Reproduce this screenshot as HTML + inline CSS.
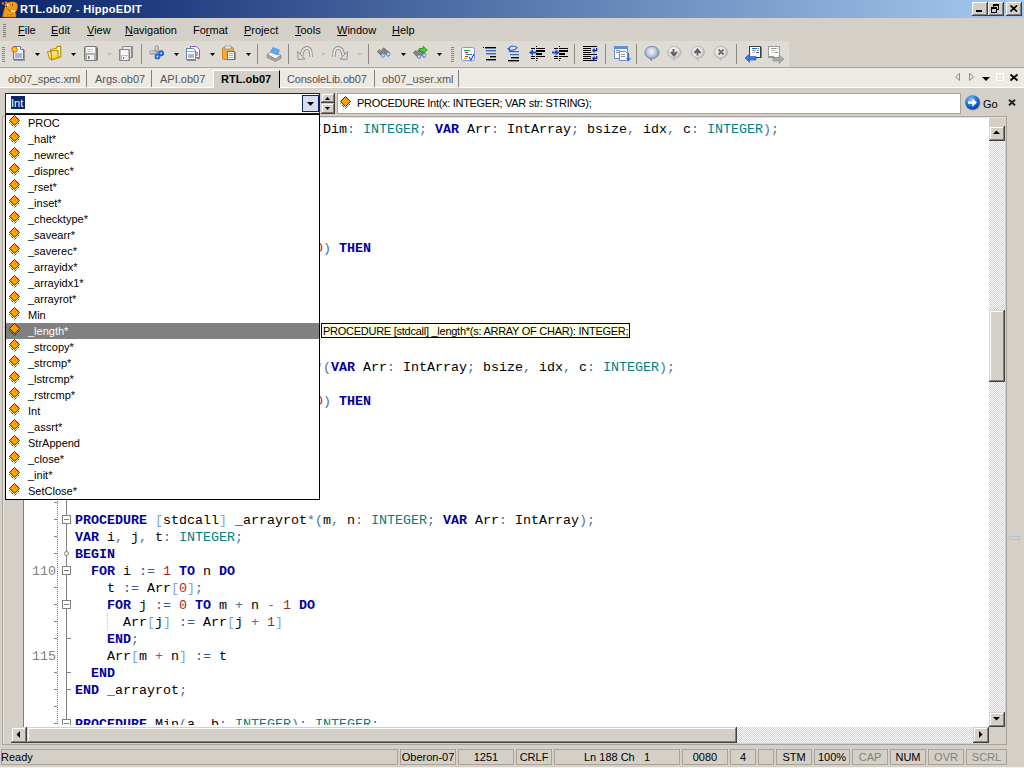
<!DOCTYPE html>
<html><head><meta charset="utf-8">
<style>
*{box-sizing:border-box}
body{margin:0;width:1024px;height:768px;position:relative;overflow:hidden;background:#D4D0C8;font-family:"Liberation Sans",sans-serif;font-size:11px;color:#000}
.a{position:absolute}
#title{left:0;top:0;width:1024px;height:18px;background:linear-gradient(to right,#0A246A,#A6CAF0)}
#title .t{left:20px;top:2px;color:#fff;font-weight:bold;font-size:11px;line-height:14px;white-space:nowrap;letter-spacing:0.3px}
.cb{width:16px;height:14px;top:2px;background:#D4D0C8;box-shadow:inset -1px -1px #404040,inset 1px 1px #fff,inset -2px -2px #808080,inset 2px 2px #D4D0C8}
.menu{top:23px;line-height:14px;white-space:nowrap}
.menu u{text-decoration:none;background:linear-gradient(#000,#000) no-repeat 0 100%/100% 1px}
.tab{top:72px;line-height:14px;white-space:nowrap;color:#555}
.sep{width:1px;background:#808080}
.btn3d{background:#D4D0C8;box-shadow:inset -1px -1px #404040,inset 1px 1px #D4D0C8,inset -2px -2px #808080,inset 2px 2px #fff}
.chk{background-color:#fff;background-image:linear-gradient(45deg,#D4D0C8 25%,transparent 25%,transparent 75%,#D4D0C8 75%),linear-gradient(45deg,#D4D0C8 25%,transparent 25%,transparent 75%,#D4D0C8 75%);background-size:2px 2px;background-position:0 0,1px 1px}
.sp{top:749px;height:16px;border:1px solid #A8A49C;line-height:14px;text-align:center;white-space:nowrap}
#code{left:75px;top:0;font-family:"Liberation Mono",monospace;font-size:13.333px;line-height:17px;white-space:pre;color:#000}
.k{color:#0000A0;font-weight:bold}
.ty{color:#008080}
.p{color:#4F6FA0}
.n{color:#A02828}
.lnum{font-family:"Liberation Mono",monospace;font-size:13.333px;line-height:17px;color:#808080;white-space:pre}
.li{height:16px;left:0;width:313px;line-height:16px;white-space:nowrap}
.li span{position:absolute;left:22px;top:0}
.li .dm{left:3px;top:0}
.sel{background:#808080;color:#fff}
.o{color:#3D5C8C}
.br{color:#7BA7D7}
i{font-style:normal}
</style></head><body>

<!-- title bar -->
<div id="title" class="a">
  <svg class="a" style="left:0px;top:0px" width="19" height="18" viewBox="0 0 19 18">
    <circle cx="2.9" cy="3.4" r="1.3" fill="#C8741A"/><circle cx="6" cy="2.6" r="1.3" fill="#C8741A"/>
    <path d="M2.5 17 Q3.5 10.5 5.2 6.5 L4.8 4.8 Q5.5 2.6 8.5 2.3 Q12.5 1.2 16.2 2.6 Q18.2 4.5 17.4 8.5 Q16.8 11 15.2 12 Q16.2 14 16 17 Z" fill="#F39A12" stroke="#B86400" stroke-width="0.5"/>
    <ellipse cx="7.1" cy="5.6" rx="1.7" ry="1.1" transform="rotate(-35 7.1 5.6)" fill="#fff"/>
    <circle cx="6.5" cy="6.2" r="0.75" fill="#000"/>
    <ellipse cx="12.5" cy="5" rx="0.55" ry="0.9" fill="#6A3000"/>
    <path d="M7.6 8.6 Q9 11.2 11.2 11.6 L15.6 11.4" fill="none" stroke="#8A4A10" stroke-width="0.8"/>
    <path d="M11 10.6 H15.3 L15 12 H11.3Z" fill="#fff"/>
    <path d="M7 14.3 Q10 15.6 13.2 14.2" fill="none" stroke="#C06A00" stroke-width="0.7"/>
  </svg>
  <div class="a t">RTL.ob07 - HippoEDIT</div>
  <div class="a cb" style="left:972px"><div class="a" style="left:4px;top:8px;width:6px;height:2px;background:#000"></div></div>
  <div class="a cb" style="left:988px">
    <div class="a" style="left:5px;top:2px;width:6px;height:6px;border:1px solid #000;border-top-width:2px"></div>
    <div class="a" style="left:3px;top:5px;width:6px;height:6px;border:1px solid #000;border-top-width:2px;background:#D4D0C8"></div>
  </div>
  <div class="a cb" style="left:1006px">
    <svg class="a" style="left:4px;top:3px" width="8" height="7"><path d="M0.5 0.5 L7 6.5 M7 0.5 L0.5 6.5" stroke="#000" stroke-width="1.7"/></svg>
  </div>
</div>

<!-- menu bar -->
<div class="a" style="left:3px;top:24px;width:3px;height:13px;background:repeating-linear-gradient(#808080 0 1px,transparent 1px 2px)"></div>
<div class="a menu" style="left:18px"><u>F</u>ile</div>
<div class="a menu" style="left:51px"><u>E</u>dit</div>
<div class="a menu" style="left:87px"><u>V</u>iew</div>
<div class="a menu" style="left:125px"><u>N</u>avigation</div>
<div class="a menu" style="left:193px">Fo<u>r</u>mat</div>
<div class="a menu" style="left:244px"><u>P</u>roject</div>
<div class="a menu" style="left:295px"><u>T</u>ools</div>
<div class="a menu" style="left:337px"><u>W</u>indow</div>
<div class="a menu" style="left:392px"><u>H</u>elp</div>

<!-- toolbar -->
<svg class="a" style="left:0;top:0" width="800" height="68" viewBox="0 0 800 68">
<defs>
<linearGradient id="gpage" x1="0" y1="0" x2="0" y2="1"><stop offset="0" stop-color="#fff"/><stop offset="1" stop-color="#DDE4F2"/></linearGradient>
<linearGradient id="gfold" x1="0" y1="0" x2="1" y2="1"><stop offset="0" stop-color="#FFF6B0"/><stop offset="1" stop-color="#F2C200"/></linearGradient>
<linearGradient id="gdisk" x1="0" y1="0" x2="1" y2="1"><stop offset="0" stop-color="#C8C8C8"/><stop offset="1" stop-color="#808080"/></linearGradient>
<radialGradient id="gsun"><stop offset="0" stop-color="#FFF200"/><stop offset="0.5" stop-color="#FFB000"/><stop offset="1" stop-color="#F05020" stop-opacity="0.8"/></radialGradient>
<radialGradient id="glens" cx="0.4" cy="0.4"><stop offset="0" stop-color="#E8F4FF"/><stop offset="1" stop-color="#5AA0E8"/></radialGradient>
<radialGradient id="gball" cx="0.45" cy="0.35"><stop offset="0" stop-color="#F4F6FA"/><stop offset="0.6" stop-color="#C0CCDC"/><stop offset="1" stop-color="#8CA0BC"/></radialGradient>
<radialGradient id="gball2" cx="0.45" cy="0.35"><stop offset="0" stop-color="#FFFFFF"/><stop offset="0.7" stop-color="#E4E4E4"/><stop offset="1" stop-color="#B8B8B8"/></radialGradient>
<path id="dd" d="M0 0H5L2.5 3Z"/>
</defs>
<!-- toolbar band -->
<rect x="0" y="41" width="789" height="26" fill="#DEDBD5"/>
<rect x="0" y="67" width="1024" height="1" fill="#A8A49C"/>
<!-- grippers -->
<g fill="#8A8A8A">
<rect x="2" y="47" width="3" height="1"/><rect x="2" y="49" width="3" height="1"/><rect x="2" y="51" width="3" height="1"/><rect x="2" y="53" width="3" height="1"/><rect x="2" y="55" width="3" height="1"/><rect x="2" y="57" width="3" height="1"/><rect x="2" y="59" width="3" height="1"/><rect x="2" y="61" width="3" height="1"/>
<rect x="451" y="47" width="3" height="1"/><rect x="451" y="49" width="3" height="1"/><rect x="451" y="51" width="3" height="1"/><rect x="451" y="53" width="3" height="1"/><rect x="451" y="55" width="3" height="1"/><rect x="451" y="57" width="3" height="1"/><rect x="451" y="59" width="3" height="1"/><rect x="451" y="61" width="3" height="1"/>
</g>
<!-- separators -->
<g fill="#8C8984">
<rect x="141" y="44" width="1" height="20"/><rect x="257" y="44" width="1" height="20"/><rect x="288" y="44" width="1" height="20"/><rect x="368" y="44" width="1" height="20"/>
<rect x="574" y="44" width="1" height="20"/><rect x="605" y="44" width="1" height="20"/><rect x="636" y="44" width="1" height="20"/><rect x="736" y="44" width="1" height="20"/>
</g>
<!-- dropdown arrows -->
<g fill="#000">
<use href="#dd" x="35" y="53"/><use href="#dd" x="71" y="53"/><use href="#dd" x="174" y="53"/><use href="#dd" x="210" y="53"/><use href="#dd" x="246" y="53"/><use href="#dd" x="401" y="53"/><use href="#dd" x="437" y="53"/>
</g>
<g fill="#C4C0B8"><use href="#dd" x="107" y="53"/><use href="#dd" x="321" y="53"/><use href="#dd" x="357" y="53"/></g>

<!-- New -->
<path d="M13.5 46.5H20.5L23.5 49.5V59.5H13.5Z" fill="url(#gpage)" stroke="#6478A8"/>
<path d="M20.5 46.5V49.5H23.5" fill="#fff" stroke="#6478A8"/>
<rect x="24" y="50" width="1" height="11" fill="#9A9A9A"/><rect x="14" y="60" width="11" height="1" fill="#9A9A9A"/>
<rect x="15" y="53" width="7" height="5" fill="#A8B8DC"/>
<circle cx="14.5" cy="49.5" r="3.2" fill="url(#gsun)"/>
<!-- Folder -->
<defs><linearGradient id="gfold2" x1="0" y1="0" x2="0" y2="1"><stop offset="0" stop-color="#FFF6B8"/><stop offset="1" stop-color="#F4CC10"/></linearGradient></defs>
<path d="M50.5 49.5L56.5 48.3L57.3 46.3L60.7 46.2V56.8L51.5 59.6Z" fill="#FFF6C8" stroke="#C48E00" stroke-width="1.2"/>
<path d="M51 50.8L57.8 50.3L58.3 57.6L51.6 59.8Z" fill="url(#gfold2)" stroke="#C48E00" stroke-width="1.2"/>
<path d="M47.6 51.8L50.8 51.2L51.6 59.6L49.4 58.4Z" fill="#FFF2A8" stroke="#C48E00" stroke-width="1.1"/>
<!-- Save -->
<path d="M84.5 47.5Q84.5 46.5 85.5 46.5H96.5L97.5 47.5V59.5Q97.5 60.5 96.5 60.5H85.5Q84.5 60.5 84.5 59.5Z" fill="#B0B0B0" stroke="#787878"/>
<rect x="96" y="48" width="1" height="12" fill="#7A7A7A"/>
<rect x="86" y="47" width="9" height="6" fill="#FAFAFA"/>
<rect x="87" y="49" width="6" height="1" fill="#C8C8C8"/><rect x="87" y="51" width="6" height="1" fill="#C8C8C8"/>
<rect x="87" y="55" width="7" height="5" fill="#F0F0F0"/><rect x="88" y="56" width="1.5" height="3" fill="#707070"/>
<!-- Save all -->
<path d="M122.5 46.5H132.5V57.5H122.5Z" fill="#E8E8E8" stroke="#8E8E8E"/>
<rect x="131" y="47" width="1.2" height="10" fill="#8A8A8A"/>
<path d="M119.5 49.5H129.5V60.5H119.5Z" fill="#BEBEBE" stroke="#858585"/>
<rect x="121" y="50" width="7" height="5" fill="#F6F6F6"/>
<rect x="122" y="56" width="6" height="4" fill="#EEEEEE"/><rect x="123" y="57" width="1" height="2" fill="#777"/>
<!-- Cut -->
<defs><linearGradient id="gblade" x1="0" y1="0" x2="1" y2="1"><stop offset="0" stop-color="#FFFFFF"/><stop offset="1" stop-color="#A0A0A0"/></linearGradient></defs>
<rect x="155.2" y="45.8" width="3" height="7.5" rx="1.3" fill="url(#gblade)" stroke="#6E6E6E" stroke-width="0.7"/>
<rect x="149.8" y="51" width="7.5" height="3" rx="1.3" fill="url(#gblade)" stroke="#6E6E6E" stroke-width="0.7"/>
<circle cx="161.2" cy="53.2" r="2" fill="none" stroke="#2166D8" stroke-width="1.9"/>
<circle cx="157.5" cy="56.6" r="2" fill="none" stroke="#2166D8" stroke-width="1.9"/>
<!-- Copy -->
<path d="M190.5 46.5H196.5L199.5 49.5V57.5H190.5Z" fill="#F8F6FC" stroke="#8A5CC0"/>
<rect x="196" y="52" width="2" height="4" fill="#B8A0DC"/>
<path d="M186.5 48.5H193.5L195.5 50.5V59.5H186.5Z" fill="#fff" stroke="#6A7EB0"/>
<rect x="187" y="51" width="8" height="1" fill="#9AAAD0"/>
<rect x="188" y="54" width="6" height="4" fill="#A8B8DC"/>
<rect x="197" y="58" width="3" height="1" fill="#8A8A8A"/><rect x="187" y="60" width="9" height="1" fill="#8A8A8A"/>
<!-- Paste -->
<rect x="222.5" y="47.5" width="11" height="12" rx="1.5" fill="#F6A83A" stroke="#D88418"/>
<rect x="225" y="46" width="6" height="3" fill="#E8E8E8" stroke="#909090" stroke-width="0.7"/>
<rect x="227.5" y="51.5" width="7" height="8" fill="#FAFAFF" stroke="#6E6E6E"/>
<g fill="#A0A8D8"><rect x="229" y="53" width="4" height="1"/><rect x="229" y="55" width="4" height="1"/><rect x="229" y="57" width="4" height="1"/></g>
<rect x="235" y="52" width="1" height="8" fill="#9A9A9A"/>
<!-- Print -->
<path d="M267 54.5L272.5 51L281 55.5L275.5 59Z" fill="#F0F0F0" stroke="#8A8A8A" stroke-width="0.8"/>
<path d="M270.5 52L273 47.5L279.5 50L277.5 55Z" fill="#5AAAF2" stroke="#3A88D8" stroke-width="0.6"/>
<path d="M267 54.5V57.5L275.5 61.5L281 58.5V55.5L275.5 59Z" fill="#A8A8A8" stroke="#7A7A7A" stroke-width="0.6"/>
<rect x="279" y="54" width="1.2" height="1.2" fill="#F09030"/>
<!-- Undo (disabled) -->
<path d="M301.5 56 Q302.5 48 307 47.8 Q311.5 48.3 311 57" fill="none" stroke="#8E8E8E" stroke-width="3.6"/>
<path d="M301.5 56 Q302.5 48 307 47.8 Q311.5 48.3 311 57" fill="none" stroke="#E6E6E6" stroke-width="1.8"/>
<path d="M297.5 51.5L298 59.5L305 59Z" fill="#DADADA" stroke="#8A8A8A" stroke-width="0.9"/>
<!-- Redo -->
<path d="M343.5 56 Q342.5 48 338 47.8 Q333.5 48.3 334 57" fill="none" stroke="#8E8E8E" stroke-width="3.6"/>
<path d="M343.5 56 Q342.5 48 338 47.8 Q333.5 48.3 334 57" fill="none" stroke="#E6E6E6" stroke-width="1.8"/>
<path d="M347.5 51.5L347 59.5L340 59Z" fill="#DADADA" stroke="#8A8A8A" stroke-width="0.9"/>
<!-- Binoculars -->
<g transform="translate(0 0)">
<path d="M377.5 51.5L379.5 49.5L385 54.5L383 57.5Z" fill="#858585" stroke="#4E4E4E" stroke-width="0.7"/>
<path d="M381.5 49.5L383.5 48L390 53L388 56.5Z" fill="#858585" stroke="#4E4E4E" stroke-width="0.7"/>
<path d="M379 50.5L383 48.7" stroke="#C8C8C8" stroke-width="0.8"/>
<circle cx="383.3" cy="55.6" r="1.9" fill="url(#glens)"/>
<circle cx="388.6" cy="54.3" r="1.9" fill="url(#glens)"/>
</g>
<!-- Find next -->
<g transform="translate(36 1.2)">
<path d="M377.5 51.5L379.5 49.5L385 54.5L383 57.5Z" fill="#858585" stroke="#4E4E4E" stroke-width="0.7"/>
<path d="M381.5 49.5L383.5 48L390 53L388 56.5Z" fill="#858585" stroke="#4E4E4E" stroke-width="0.7"/>
<circle cx="383.3" cy="55.6" r="1.9" fill="url(#glens)"/>
<circle cx="388.6" cy="54.3" r="1.9" fill="url(#glens)"/>
</g>
<path d="M419.5 48.5H423V46.3L427.3 50L423 53.7V51.5H419.5Z" fill="#46D23C" stroke="#1E9A22" stroke-width="0.9"/>
<!-- syntax -->
<rect x="461.5" y="47.5" width="13" height="13" rx="2" fill="#F8FAFF" stroke="#7A9AE0"/>
<rect x="464" y="50" width="6" height="1" fill="#22A030"/><rect x="465" y="52" width="3" height="1" fill="#E02020"/>
<rect x="466" y="54" width="6" height="1" fill="#3070D0"/><rect x="465" y="56" width="3" height="1" fill="#E02020"/><rect x="464" y="58" width="3" height="1" fill="#E0A000"/>
<path d="M469 57L471 60L474 54" fill="none" stroke="#2060C0" stroke-width="1.2"/>
<!-- align right -->
<g fill="#000"><rect x="485" y="47" width="11" height="1.4"/><rect x="490" y="56" width="6" height="1.4"/><rect x="486" y="59" width="10" height="1.4"/><rect x="483" y="47" width="1" height="1"/></g>
<g fill="#2D6CD0"><rect x="486" y="50" width="10" height="1.4"/><rect x="486" y="53" width="10" height="1.4"/></g>
<!-- wrap -->
<path d="M509 50.5H512 Q517 49 517 47.5 Q516 46 512 46 Q508 47 510 50" fill="none" stroke="#2D6CD0" stroke-width="1.2"/>
<path d="M507 48L509 51L510 48Z" fill="#2D6CD0"/>
<rect x="509" y="51" width="10" height="1.2" fill="#2D6CD0"/><rect x="510" y="54" width="9" height="1.2" fill="#2D6CD0"/>
<rect x="511" y="57" width="8" height="1.4" fill="#000"/><rect x="508" y="60" width="11" height="1.4" fill="#000"/>
<!-- outdent -->
<g fill="#000" transform="translate(0 0)"><rect x="536" y="46" width="1" height="1"/><rect x="536" y="60" width="1" height="1"/><rect x="531" y="48" width="4" height="1"/><rect x="536" y="48" width="9" height="1"/><rect x="536" y="50" width="9" height="2"/><rect x="536" y="53" width="6" height="2"/><rect x="531" y="56" width="4" height="1"/><rect x="536" y="56" width="9" height="1"/><rect x="531" y="58" width="4" height="1"/><rect x="536" y="58" width="2" height="1"/></g><path d="M529 52.5L533 49.3V51.6H536.5V53.4H533V55.7Z" fill="#1E48D0"/>
<!-- indent -->
<g fill="#000" transform="translate(23 0)"><rect x="536" y="46" width="1" height="1"/><rect x="536" y="60" width="1" height="1"/><rect x="531" y="48" width="4" height="1"/><rect x="536" y="48" width="9" height="1"/><rect x="536" y="50" width="9" height="2"/><rect x="536" y="53" width="6" height="2"/><rect x="531" y="56" width="4" height="1"/><rect x="536" y="56" width="9" height="1"/><rect x="531" y="58" width="4" height="1"/><rect x="536" y="58" width="2" height="1"/></g><path d="M559.5 52.5L555.5 49.3V51.6H552V53.4H555.5V55.7Z" fill="#1E48D0"/>
<!-- paragraph -->
<g fill="#000"><rect x="583" y="46" width="14" height="1"/><rect x="583" y="48" width="8" height="1"/><rect x="583" y="50" width="8" height="1"/><rect x="583" y="52" width="8" height="1"/><rect x="583" y="54" width="14" height="1"/><rect x="583" y="56" width="8" height="1"/><rect x="583" y="58" width="8" height="1"/><rect x="583" y="60" width="14" height="1"/></g>
<g fill="#0A2AA8"><path d="M596 48H597.3V51.3H594.5V53.2L592 50.5L594.5 47.8V49.7H596Z"/><path d="M596 56H597.3V59.3H594.5V61.2L592 58.5L594.5 55.8V57.7H596Z"/></g>
<!-- window -->
<rect x="614.5" y="46.5" width="13" height="12" fill="#F4F7FC" stroke="#6A8ED0"/>
<rect x="615" y="47" width="12" height="2" fill="#5A90E0"/>
<rect x="616" y="50" width="4" height="1" fill="#8090B0"/><rect x="616" y="52" width="4" height="1" fill="#8090B0"/>
<path d="M619.5 51.5H625.5L627.5 53.5V60.5H619.5Z" fill="#fff" stroke="#6A8ED0"/>
<rect x="621" y="54" width="4" height="1" fill="#8090B0"/><rect x="621" y="56" width="4" height="1" fill="#8090B0"/>
<path d="M628.5 53V60M626.5 58L628.5 60.5L630.5 58" fill="none" stroke="#2D6CD0" stroke-width="1.2"/>
<!-- balloons -->
<path d="M652 46.5 A6.5 6 0 1 1 651 58.3 L652 61 L649 58 A6.5 6 0 0 1 652 46.5Z" fill="url(#gball)" stroke="#6E8AAE" stroke-width="0.9"/>
<path d="M674.5 46.5 A6 5.8 0 1 1 674 58 L674.5 60.5 L672 57.8 A6 5.8 0 0 1 674.5 46.5Z" fill="url(#gball2)" stroke="#B4B4B4" stroke-width="0.9"/>
<path d="M673.5 49V54M671 52L674 55.5L677 52" fill="none" stroke="#606060" stroke-width="2"/>
<path d="M698 46.5 A6 5.8 0 1 1 697.5 58 L698 60.5 L695.5 57.8 A6 5.8 0 0 1 698 46.5Z" fill="url(#gball2)" stroke="#B4B4B4" stroke-width="0.9"/>
<path d="M697.5 55.5V50.5M694.5 53L697.5 49.5L700.5 53" fill="none" stroke="#606060" stroke-width="2"/>
<path d="M721 46.5 A6 5.8 0 1 1 720.5 58 L721 60.5 L718.5 57.8 A6 5.8 0 0 1 721 46.5Z" fill="url(#gball2)" stroke="#B4B4B4" stroke-width="0.9"/>
<path d="M718.5 49.5L723.5 54.5M723.5 49.5L718.5 54.5" fill="none" stroke="#707070" stroke-width="2"/>
<!-- back -->
<rect x="749.5" y="46.5" width="11" height="11" fill="#fff" stroke="#404040"/>
<rect x="761" y="47" width="1" height="11" fill="#808080"/>
<rect x="752" y="48" width="5" height="1" fill="#2A62C8"/><rect x="758" y="48" width="1" height="1" fill="#2A62C8"/>
<rect x="752" y="50" width="4" height="1" fill="#999"/><rect x="757" y="50" width="2" height="1" fill="#999"/>
<rect x="752" y="52" width="3" height="1" fill="#BBB"/><rect x="756" y="52" width="3" height="1" fill="#2A62C8"/>
<path d="M745 58L749.5 54V56.5H756V60H749.5V62.5Z" fill="#3A7AE0" stroke="#2050B0" stroke-width="0.6"/>
<!-- forward -->
<rect x="768.5" y="46.5" width="11" height="11" fill="#fff" stroke="#9A9A9A"/>
<rect x="768" y="56" width="6" height="2" fill="#9A9A9A"/>
<rect x="771" y="48" width="5" height="1" fill="#999"/><rect x="777" y="48" width="1" height="1" fill="#999"/>
<rect x="771" y="50" width="4" height="1" fill="#BBB"/><rect x="771" y="52" width="3" height="1" fill="#CCC"/><rect x="775" y="52" width="3" height="1" fill="#888"/>
<path d="M784 59L779 55V57.5H773V61H779V63.5Z" fill="#A8A8A8" stroke="#8A8A8A" stroke-width="0.6"/>
</svg>


<!-- tab bar -->
<div class="a" style="left:0;top:67px;width:1024px;height:1px;background:#A9A59D"></div>
<div class="a" style="left:0;top:68px;width:1024px;height:19px;background:#EDEAE4"></div>
<div class="a" style="left:0;top:87px;width:1024px;height:1px;background:#fff"></div>
<div class="a tab" style="left:8px;letter-spacing:-0.15px">ob07_spec.xml</div>
<div class="a sep" style="left:86px;top:70px;height:17px"></div>
<div class="a tab" style="left:95px">Args.ob07</div>
<div class="a sep" style="left:151px;top:70px;height:17px"></div>
<div class="a tab" style="left:160px">API.ob07</div>
<div class="a" style="left:213px;top:70px;width:67px;height:18px;background:#D4D0C8;border-left:1px solid #fff;border-top:1px solid #fff;border-right:1px solid #000"></div>
<div class="a tab" style="left:221px;color:#000;font-weight:bold">RTL.ob07</div>
<div class="a tab" style="left:287px;letter-spacing:-0.2px">ConsoleLib.ob07</div>
<div class="a sep" style="left:374px;top:70px;height:17px"></div>
<div class="a tab" style="left:382px">ob07_user.xml</div>
<div class="a sep" style="left:458px;top:70px;height:17px"></div>

<svg class="a" style="left:950px;top:70px" width="74" height="16" viewBox="950 70 74 16">
<path d="M959.5 73.5V80.5L955.5 77Z" fill="none" stroke="#8A8A8A"/>
<path d="M969.5 73.5V80.5L973.5 77Z" fill="none" stroke="#8A8A8A"/>
<path d="M982 77H990L986 81Z" fill="#000"/>
<rect x="996.5" y="73.5" width="7" height="7" fill="none" stroke="#fff"/>
<path d="M1010.5 74.5L1017.5 80.5M1017.5 74.5L1010.5 80.5" stroke="#000" stroke-width="1.8"/>
</svg>
<!-- nav bar -->
<div class="a" style="left:5px;top:93px;width:315px;height:21px;border:1px solid #0A246A;background:#fff"></div>
<div class="a" style="left:11px;top:96px;width:14px;height:13px;background:#0A246A"></div>
<div class="a" style="left:11px;top:96px;color:#fff;line-height:14px">Int</div>
<div class="a" style="left:302px;top:95px;width:17px;height:17px;border:1px solid #0A246A;background:#D8DDEF"></div>
<svg class="a" style="left:307px;top:102px" width="7" height="4"><path d="M0 0H7L3.5 4Z" fill="#000"/></svg>
<div class="a btn3d" style="left:321px;top:93px;width:14px;height:10px"></div>
<div class="a btn3d" style="left:321px;top:103px;width:14px;height:11px"></div>
<svg class="a" style="left:325px;top:97px" width="5" height="3"><path d="M0 3H5L2.5 0Z" fill="#000"/></svg>
<svg class="a" style="left:325px;top:107px" width="5" height="3"><path d="M0 0H5L2.5 3Z" fill="#000"/></svg>
<div class="a" style="left:337px;top:93px;width:624px;height:21px;background:#fff;border:1px solid #A8A49C"></div>
<div class="a" style="left:357px;top:96px;line-height:14px;white-space:nowrap;letter-spacing:-0.3px">PROCEDURE Int(x: INTEGER; VAR str: STRING);</div>
<svg class="a" style="left:340px;top:96px" width="11" height="13"><use href="#dia"/></svg>
<svg class="a" style="left:964px;top:94px" width="18" height="18" viewBox="0 0 18 18">
<defs><radialGradient id="ggo" cx="0.4" cy="0.3" r="0.7"><stop offset="0" stop-color="#7CC4FF"/><stop offset="0.6" stop-color="#1F6FD8"/><stop offset="1" stop-color="#0A3E9E"/></radialGradient></defs>
<circle cx="8.5" cy="8.5" r="7.5" fill="#7A7A7A" opacity="0.35" transform="translate(0.8 0.8)"/>
<circle cx="8.5" cy="8.5" r="7.3" fill="url(#ggo)"/>
<path d="M4 7.3H8.3V4.3L12.8 8.5L8.3 12.7V9.7H4Z" fill="#fff"/>
</svg>
<div class="a" style="left:983px;top:97px;line-height:14px">Go</div>
<svg class="a" style="left:1008px;top:99px" width="8" height="7"><path d="M1 0.8L7 6.2M7 0.8L1 6.2" stroke="#222" stroke-width="2"/></svg>

<!-- editor frame -->
<div class="a" style="left:2px;top:116px;width:1005px;height:629px;border:1px solid #A8A49C"></div>
<div class="a" style="left:3px;top:117px;width:1003px;height:1px;background:#E6E3DD"></div>
<div class="a" style="left:3px;top:117px;width:1px;height:627px;background:#E6E3DD"></div>
<div class="a" style="left:23px;top:118px;width:1px;height:609px;background:#808080"></div>
<div class="a" style="left:24px;top:725px;width:965px;height:2px;background:#fff"></div>
<div class="a" style="left:24px;top:118px;width:965px;height:607px;background:#fff;overflow:hidden">
  <div class="a" id="code" style="left:51px;top:3px"><b class="k">PROCEDURE</b> <i class="br">[</i>stdcall<i class="br">]</i> _arrayidx<i class="p">*</i><i class="p">(</i>Dim<i class="p">:</i> <i class="ty">INTEGER</i><i class="p">;</i> <b class="k">VAR</b> Arr<i class="p">:</i> IntArray<i class="p">;</i> bsize<i class="p">,</i> idx<i class="p">,</i> c<i class="p">:</i> <i class="ty">INTEGER</i><i class="p">)</i><i class="p">;</i>






                        idx <i class="p">&lt;</i> <i class="n">0</i><i class="p">)</i> <b class="k">THEN</b>






<b class="k">PROCEDURE</b> <i class="br">[</i>stdcall<i class="br">]</i> _arrayidx1<i class="p">*</i><i class="p">(</i><b class="k">VAR</b> Arr<i class="p">:</i> IntArray<i class="p">;</i> bsize<i class="p">,</i> idx<i class="p">,</i> c<i class="p">:</i> <i class="ty">INTEGER</i><i class="p">)</i><i class="p">;</i>

                        idx <i class="p">&lt;</i> <i class="n">0</i><i class="p">)</i> <b class="k">THEN</b>






<b class="k">PROCEDURE</b> <i class="br">[</i>stdcall<i class="br">]</i> _arrayrot<i class="p">*</i><i class="p">(</i>m<i class="p">,</i> n<i class="p">:</i> <i class="ty">INTEGER</i><i class="p">;</i> <b class="k">VAR</b> Arr<i class="p">:</i> IntArray<i class="p">)</i><i class="p">;</i>
<b class="k">VAR</b> i<i class="p">,</i> j<i class="p">,</i> t<i class="p">:</i> <i class="ty">INTEGER</i><i class="p">;</i>
<b class="k">BEGIN</b>
  <b class="k">FOR</b> i <i class="o">:=</i> <i class="n">1</i> <b class="k">TO</b> n <b class="k">DO</b>
    t <i class="o">:=</i> Arr<i class="br">[</i><i class="n">0</i><i class="br">]</i><i class="p">;</i>
    <b class="k">FOR</b> j <i class="o">:=</i> <i class="n">0</i> <b class="k">TO</b> m <i class="p">+</i> n <i class="p">-</i> <i class="n">1</i> <b class="k">DO</b>
      Arr<i class="br">[</i>j<i class="br">]</i> <i class="o">:=</i> Arr<i class="br">[</i>j <i class="p">+</i> <i class="n">1</i><i class="br">]</i>
    <b class="k">END</b><i class="p">;</i>
    Arr<i class="br">[</i>m <i class="p">+</i> n<i class="br">]</i> <i class="o">:=</i> t
  <b class="k">END</b>
<b class="k">END</b> _arrayrot<i class="p">;</i>

<b class="k">PROCEDURE</b> Min<i class="p">(</i>a<i class="p">,</i> b<i class="p">:</i> <i class="ty">INTEGER</i><i class="p">)</i><i class="p">:</i> <i class="ty">INTEGER</i><i class="p">;</i></div>
</div>
<svg class="a" style="left:24px;top:118px" width="60" height="607" viewBox="24 118 60 607">
<path d="M57.5 117V727" stroke="#808080" stroke-dasharray="1 1"/>
<rect x="54" y="128" width="3" height="1" fill="#808080"/>
<rect x="54" y="162" width="3" height="1" fill="#808080"/>
<rect x="54" y="179" width="3" height="1" fill="#808080"/>
<rect x="54" y="196" width="3" height="1" fill="#808080"/>
<rect x="54" y="213" width="3" height="1" fill="#808080"/>
<rect x="54" y="247" width="3" height="1" fill="#808080"/>
<rect x="54" y="264" width="3" height="1" fill="#808080"/>
<rect x="54" y="281" width="3" height="1" fill="#808080"/>
<rect x="54" y="298" width="3" height="1" fill="#808080"/>
<rect x="54" y="332" width="3" height="1" fill="#808080"/>
<rect x="54" y="349" width="3" height="1" fill="#808080"/>
<rect x="54" y="366" width="3" height="1" fill="#808080"/>
<rect x="54" y="383" width="3" height="1" fill="#808080"/>
<rect x="54" y="417" width="3" height="1" fill="#808080"/>
<rect x="54" y="434" width="3" height="1" fill="#808080"/>
<rect x="54" y="451" width="3" height="1" fill="#808080"/>
<rect x="54" y="468" width="3" height="1" fill="#808080"/>
<rect x="54" y="502" width="3" height="1" fill="#808080"/>
<rect x="54" y="519" width="3" height="1" fill="#808080"/>
<rect x="54" y="536" width="3" height="1" fill="#808080"/>
<rect x="54" y="553" width="3" height="1" fill="#808080"/>
<rect x="54" y="587" width="3" height="1" fill="#808080"/>
<rect x="54" y="604" width="3" height="1" fill="#808080"/>
<rect x="54" y="621" width="3" height="1" fill="#808080"/>
<rect x="54" y="638" width="3" height="1" fill="#808080"/>
<rect x="54" y="672" width="3" height="1" fill="#808080"/>
<rect x="54" y="689" width="3" height="1" fill="#808080"/>
<rect x="54" y="706" width="3" height="1" fill="#808080"/>
<rect x="54" y="723" width="3" height="1" fill="#808080"/>
<rect x="66" y="117" width="1" height="610" fill="#808080"/>
<rect x="62.5" y="600.5" width="8" height="8" fill="#fff" stroke="#808080"/>
<rect x="64" y="604" width="5" height="1" fill="#808080"/>
<rect x="62.5" y="515.5" width="8" height="8" fill="#fff" stroke="#808080"/>
<rect x="64" y="519" width="5" height="1" fill="#808080"/>
<rect x="62.5" y="566.5" width="8" height="8" fill="#fff" stroke="#808080"/>
<rect x="64" y="570" width="5" height="1" fill="#808080"/>
<rect x="62.5" y="719.5" width="8" height="8" fill="#fff" stroke="#808080"/>
<rect x="64" y="723" width="5" height="1" fill="#808080"/>
<circle cx="66.5" cy="553.5" r="2" fill="#fff" stroke="#808080"/>
<rect x="67" y="638" width="4" height="1" fill="#808080"/>
<rect x="67" y="672" width="4" height="1" fill="#808080"/>
<rect x="67" y="689" width="4" height="1" fill="#808080"/>
</svg>
<svg class="a" style="left:107px;top:613px" width="1" height="17"><path d="M0.5 0V17" stroke="#A8C8F0" stroke-dasharray="1 1"/></svg>
<div class="a lnum" style="left:31px;top:137px">85</div>
<div class="a lnum" style="left:31px;top:222px">90</div>
<div class="a lnum" style="left:31px;top:307px">95</div>
<div class="a lnum" style="left:31px;top:392px">100</div>
<div class="a lnum" style="left:31px;top:477px">105</div>
<div class="a lnum" style="left:32px;top:563px">110</div>
<div class="a lnum" style="left:32px;top:648px">115</div>
<!-- vertical scrollbar -->
<div class="a chk" style="left:989px;top:141px;width:16px;height:571px"></div>
<div class="a btn3d" style="left:989px;top:126px;width:16px;height:15px"></div>
<div class="a btn3d" style="left:989px;top:310px;width:16px;height:72px"></div>
<div class="a btn3d" style="left:989px;top:712px;width:16px;height:15px"></div>
<svg class="a" style="left:993px;top:130px" width="7" height="4"><path d="M0 4H7L3.5 0.5Z" fill="#000"/></svg>
<svg class="a" style="left:993px;top:717px" width="7" height="4"><path d="M0 0H7L3.5 3.5Z" fill="#000"/></svg>
<!-- horizontal scrollbar -->
<div class="a chk" style="left:27px;top:727px;width:946px;height:16px"></div>
<div class="a btn3d" style="left:11px;top:727px;width:16px;height:16px"></div>
<div class="a btn3d" style="left:27px;top:727px;width:710px;height:16px"></div>
<div class="a btn3d" style="left:973px;top:727px;width:16px;height:16px"></div>
<svg class="a" style="left:16px;top:731px" width="4" height="7"><path d="M4 0V7L0.5 3.5Z" fill="#000"/></svg>
<svg class="a" style="left:979px;top:731px" width="4" height="7"><path d="M0 0V7L3.5 3.5Z" fill="#000"/></svg>
<div class="a" style="left:1009px;top:536px;width:11px;height:4px;border:1px solid #A6C8E8"></div>

<!-- status bar -->
<div class="a sp" style="left:1px;width:397px"></div>
<div class="a" style="left:1px;top:750px;line-height:14px">Ready</div>
<div class="a sp" style="left:400px;width:56px">Oberon-07</div>
<div class="a sp" style="left:458px;width:56px">1251</div>
<div class="a sp" style="left:516px;width:36px">CRLF</div>
<div class="a sp" style="left:554px;width:126px">Ln 188 Ch &nbsp; 1</div>
<div class="a sp" style="left:682px;width:46px">0080</div>
<div class="a sp" style="left:730px;width:26px">4</div>
<div class="a sp" style="left:758px;width:16px"></div>
<div class="a sp" style="left:776px;width:36px">STM</div>
<div class="a sp" style="left:814px;width:36px">100%</div>
<div class="a sp" style="left:852px;width:36px;color:#808080">CAP</div>
<div class="a sp" style="left:890px;width:36px">NUM</div>
<div class="a sp" style="left:928px;width:36px;color:#808080">OVR</div>
<div class="a sp" style="left:966px;width:41px;color:#808080">SCRL</div>

<div class="a" style="left:0;top:767px;width:1024px;height:1px;background:#F4F3EF"></div>
<!-- dropdown list -->
<svg width="0" height="0" style="position:absolute"><defs><g id="dia"><path d="M0.5 7.5 L5.5 12.5 L10.5 7.5" fill="none" stroke="#000" stroke-dasharray="1 1"/><path d="M5.5 0.5 L10.5 5.5 L5.5 10.5 L0.5 5.5Z" fill="#FF9C00" stroke="#333" stroke-width="1"/></g></defs></svg>
<div class="a" id="list" style="left:5px;top:114px;width:315px;height:386px;border:1px solid #000;background:#fff">
<div class="a li" style="top:0px"><svg class="a dm" width="11" height="13"><use href="#dia"/></svg><span>PROC</span></div>
<div class="a li" style="top:16px"><svg class="a dm" width="11" height="13"><use href="#dia"/></svg><span>_halt*</span></div>
<div class="a li" style="top:32px"><svg class="a dm" width="11" height="13"><use href="#dia"/></svg><span>_newrec*</span></div>
<div class="a li" style="top:48px"><svg class="a dm" width="11" height="13"><use href="#dia"/></svg><span>_disprec*</span></div>
<div class="a li" style="top:64px"><svg class="a dm" width="11" height="13"><use href="#dia"/></svg><span>_rset*</span></div>
<div class="a li" style="top:80px"><svg class="a dm" width="11" height="13"><use href="#dia"/></svg><span>_inset*</span></div>
<div class="a li" style="top:96px"><svg class="a dm" width="11" height="13"><use href="#dia"/></svg><span>_checktype*</span></div>
<div class="a li" style="top:112px"><svg class="a dm" width="11" height="13"><use href="#dia"/></svg><span>_savearr*</span></div>
<div class="a li" style="top:128px"><svg class="a dm" width="11" height="13"><use href="#dia"/></svg><span>_saverec*</span></div>
<div class="a li" style="top:144px"><svg class="a dm" width="11" height="13"><use href="#dia"/></svg><span>_arrayidx*</span></div>
<div class="a li" style="top:160px"><svg class="a dm" width="11" height="13"><use href="#dia"/></svg><span>_arrayidx1*</span></div>
<div class="a li" style="top:176px"><svg class="a dm" width="11" height="13"><use href="#dia"/></svg><span>_arrayrot*</span></div>
<div class="a li" style="top:192px"><svg class="a dm" width="11" height="13"><use href="#dia"/></svg><span>Min</span></div>
<div class="a li sel" style="top:208px"><svg class="a dm" width="11" height="13"><use href="#dia"/></svg><span>_length*</span></div>
<div class="a li" style="top:224px"><svg class="a dm" width="11" height="13"><use href="#dia"/></svg><span>_strcopy*</span></div>
<div class="a li" style="top:240px"><svg class="a dm" width="11" height="13"><use href="#dia"/></svg><span>_strcmp*</span></div>
<div class="a li" style="top:256px"><svg class="a dm" width="11" height="13"><use href="#dia"/></svg><span>_lstrcmp*</span></div>
<div class="a li" style="top:272px"><svg class="a dm" width="11" height="13"><use href="#dia"/></svg><span>_rstrcmp*</span></div>
<div class="a li" style="top:288px"><svg class="a dm" width="11" height="13"><use href="#dia"/></svg><span>Int</span></div>
<div class="a li" style="top:304px"><svg class="a dm" width="11" height="13"><use href="#dia"/></svg><span>_assrt*</span></div>
<div class="a li" style="top:320px"><svg class="a dm" width="11" height="13"><use href="#dia"/></svg><span>StrAppend</span></div>
<div class="a li" style="top:336px"><svg class="a dm" width="11" height="13"><use href="#dia"/></svg><span>_close*</span></div>
<div class="a li" style="top:352px"><svg class="a dm" width="11" height="13"><use href="#dia"/></svg><span>_init*</span></div>
<div class="a li" style="top:368px"><svg class="a dm" width="11" height="13"><use href="#dia"/></svg><span>SetClose*</span></div>
</div>

<!-- tooltip -->
<div class="a" style="left:321px;top:323px;width:309px;height:15px;border:1px solid #000;background:#FFFFE1"></div>
<div class="a" style="left:323px;top:325px;line-height:13px;white-space:nowrap;letter-spacing:-0.26px">PROCEDURE [stdcall] _length*(s: ARRAY OF CHAR): INTEGER;</div>

</body></html>
